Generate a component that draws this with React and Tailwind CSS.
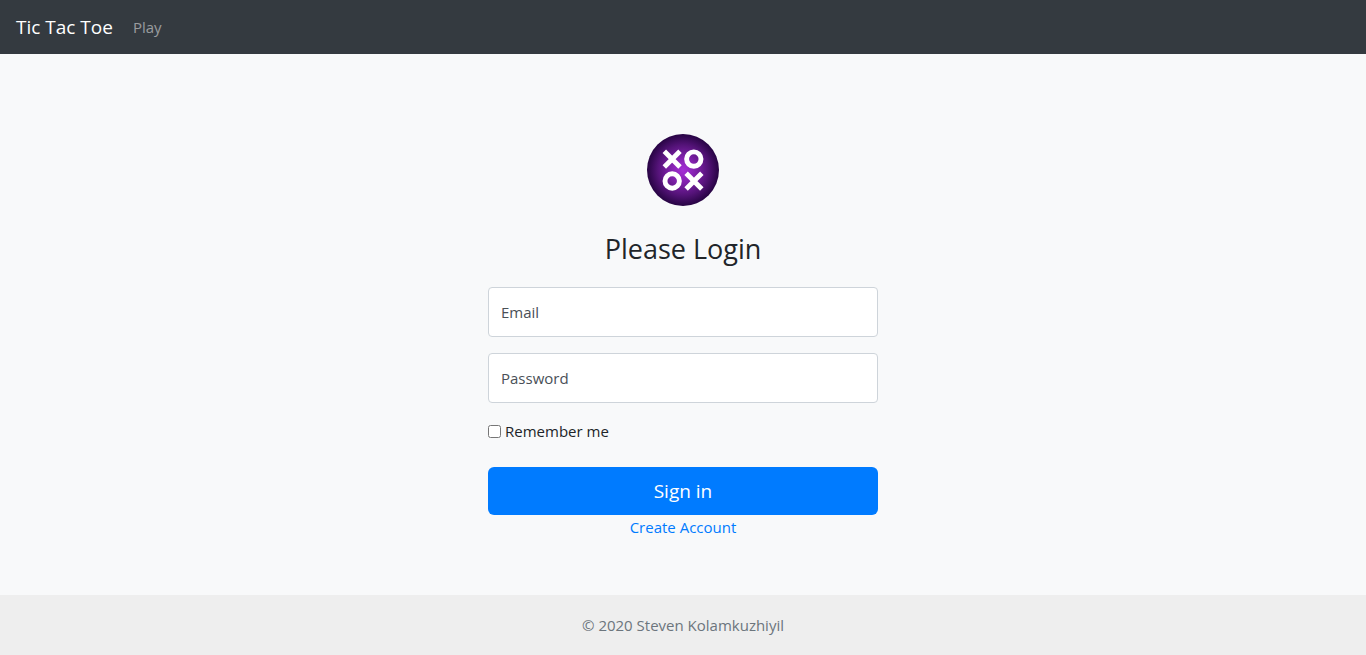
import { useState } from "react";

function Logo() {
  return (
    <svg className="mx-auto mb-6 block size-[72px]" viewBox="0 0 72 72" role="img" aria-label="Tic Tac Toe">
      <defs>
        <radialGradient id="glow">
          <stop offset="0" stopColor="#a52fd6" />
          <stop offset="0.3" stopColor="#8824b4" />
          <stop offset="0.7" stopColor="#541378" />
          <stop offset="1" stopColor="#270443" />
        </radialGradient>
      </defs>
      <circle cx="36" cy="36" r="36" fill="url(#glow)" />
      <g fill="none" stroke="#fff" strokeWidth="4.9">
        <path d="M17.3 17.2 33 32.9M33 17.2 17.3 32.9" />
        <circle cx="46.8" cy="25.1" r="7.2" />
        <circle cx="25.2" cy="47" r="7.2" />
        <path d="M39.1 39.2 54.8 54.9M54.8 39.2 39.1 54.9" />
      </g>
    </svg>
  );
}

function Field({ id, label, type }) {
  const [value, setValue] = useState("");
  return (
    <div className="relative mb-4">
      <input
        id={id}
        type={type}
        value={value}
        onChange={(e) => setValue(e.target.value)}
        className="block h-[50px] w-full rounded border border-[#ced4da] bg-white px-3 text-[#495057] outline-none focus:border-[#80bdff]"
      />
      <label
        htmlFor={id}
        className={
          value
            ? "pointer-events-none absolute top-0 left-0 px-3 text-xs text-[#777]"
            : "pointer-events-none absolute inset-0 flex items-center px-[13px] text-[#495057]"
        }
      >
        {label}
      </label>
    </div>
  );
}

export default function App() {
  return (
    <div className="flex min-h-screen flex-col bg-[#f8f9fa] font-['Open_Sans','Noto_Sans',sans-serif] text-[15px] leading-6 text-[#212529]">
      <nav className="flex h-[54px] items-center gap-5 bg-[#343a40] px-4">
        <a href="#" className="text-[19px] text-white">Tic Tac Toe</a>
        <a href="#play" className="text-white/50">Play</a>
      </nav>
      <main className="flex flex-1 items-start justify-center pt-20 pb-10">
        <form className="w-full max-w-[420px] px-[15px]" onSubmit={(e) => e.preventDefault()}>
          <Logo />
          <h1 className="mb-5 text-center text-[27px] leading-[37px]">Please Login</h1>
          <Field id="email" label="Email" type="email" />
          <Field id="password" label="Password" type="password" />
          <label className="mb-6 flex items-center gap-1">
            <input type="checkbox" className="size-[13px]" />
            Remember me
          </label>
          <button type="submit" className="block h-12 w-full rounded-md bg-[#007bff] text-[19px] text-white">
            Sign in
          </button>
          <a href="#register" className="mx-auto block w-fit text-[#007bff]">Create Account</a>
        </form>
      </main>
      <footer className="flex h-[60px] items-center justify-center bg-[#eeeeee] text-[#6c757d]">
        © 2020 Steven Kolamkuzhiyil
      </footer>
    </div>
  );
}
